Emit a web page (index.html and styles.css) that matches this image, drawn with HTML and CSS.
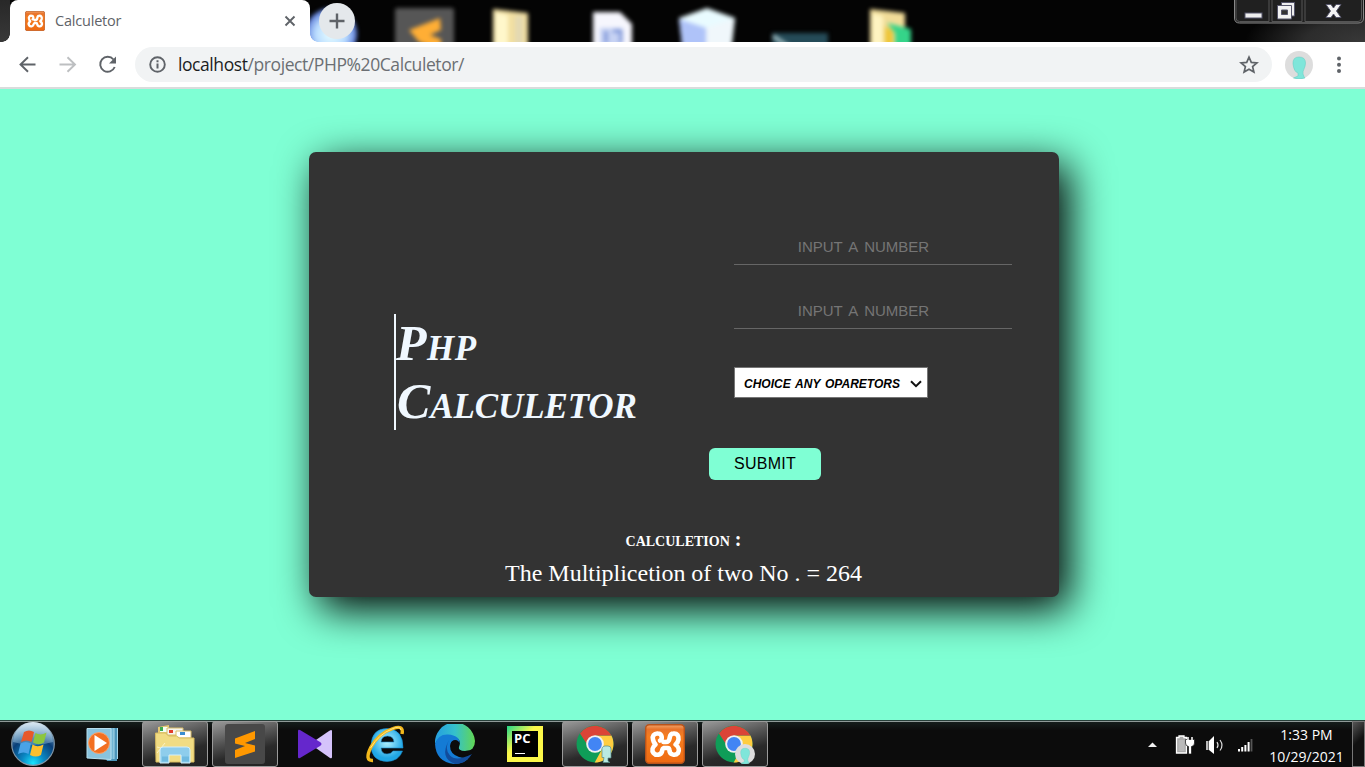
FILE: index.html
```html
<!DOCTYPE html>
<html lang="en">
<head>
<meta charset="utf-8">
<title>Calculetor</title>
<link rel="stylesheet" href="styles.css">
</head>
<body>
<svg width="0" height="0" class="defs">
  <defs>
    <linearGradient id="org" x1="0" y1="0" x2="0" y2="1"><stop offset="0" stop-color="#f3a56c"/><stop offset=".12" stop-color="#e8732b"/><stop offset=".3" stop-color="#f77d1e"/><stop offset="1" stop-color="#ee6a12"/></linearGradient>
    <symbol id="xampp" viewBox="0 0 40 40">
      <rect x=".7" y=".7" width="38.6" height="38.6" rx="3.5" fill="url(#org)" stroke="#b9531a" stroke-width="1.4"/>
      <path d="M15 16.500C18 15 17 9.500 13 9.500C9 9 7 12.500 8 15.500Q8.500 18.500 10.500 20.500C7.500 23 6.500 26.500 8.500 29C11 32 16 31 17 27.500Q17.300 24.500 19 24H22.500Q24.500 24 24.500 27C25 31 30.500 32 33 29C34.500 26.500 34 23 30.500 20.500Q33 18.500 33.500 15.500C34 12 32 9 28.500 9.500C24.500 9.500 25 13 24.500 14.500Q24 18 21 18H18.500" fill="none" stroke="#fff" stroke-width="4.600" stroke-linecap="round" stroke-linejoin="round"/>
    </symbol>
    <symbol id="chrome" viewBox="0 0 38 38">
      <circle cx="19" cy="19" r="18.500" fill="#0f9d58"/>
      <path d="M3 9.700L11 23l8-4z" fill="#0f9d58"/>
      <path d="M19 10.500h16.400A18.500 18.500 0 0 1 18.700 37.500L26.500 23.200z" fill="#ffcd40"/>
      <path d="M4 8.500A18.500 18.500 0 0 1 35.400 10.500H19L11.500 20z" fill="#db4437"/>
      <circle cx="19" cy="19" r="8.800" fill="#f1f1f1"/><circle cx="19" cy="19" r="6.900" fill="#4285f4"/>
    </symbol>
    <symbol id="avatar" viewBox="0 0 28 28">
      <circle cx="14" cy="14" r="14" fill="#ddd"/>
      <path d="M8 13Q7.500 6 14 6T20.500 12C20.500 17 17.500 19 18 23Q19 26 20 27Q14 29 8.500 27L13 25V22Q9 21 8 13z" fill="#7fe6da" stroke="#61cbc0" stroke-width=".5"/>
    </symbol>
  </defs>
</svg>

<header class="titlebar">
  <svg class="desktop" viewBox="310 0 1055 42" width="1055" height="42">
    <defs>
      <radialGradient id="globe"><stop offset="0" stop-color="#eaffff"/><stop offset=".6" stop-color="#b9dcff"/><stop offset="1" stop-color="#5877d8"/></radialGradient>
      <radialGradient id="shine" cx="1" cy="1" r="1"><stop offset="0" stop-color="#383838"/><stop offset=".5" stop-color="#2c2c2c"/><stop offset="1" stop-color="#2c2c2c" stop-opacity="0"/></radialGradient>
    </defs>
    <rect x="1245" width="120" height="42" fill="url(#shine)"/>
    <g class="blurred">
      <circle cx="331" cy="34" r="26" fill="url(#globe)"/>
      <rect x="395" y="8" width="59" height="50" rx="2" fill="#565656"/>
      <path d="M440 18l-31 12 10 12 22 9v-12l-11-4 11-5z" fill="#ffae35"/>
      <path d="M493 9l35 4v40h-35z" fill="#f2dfa1"/><path d="M495 12l13 3v35h-13z" fill="#fff7cb"/><path d="M515 16h8v35h-8z" fill="#e3d9b3"/>
      <path d="M593 12h27l12 12v30h-39z" fill="#f6f6fd"/><path d="M600 28h22v24h-22z" fill="#c6d2f3"/><path d="M606 31v12M613 31h8v12" fill="none" stroke="#7a92d6" stroke-width="3"/>
      <path d="M679 18l28-10 28 10-4 35h-48z" fill="#e9fbff"/><path d="M679 19l27 9v25h-23z" fill="#afc3f9"/><path d="M706 28l28-9-4 33h-24z" fill="#f0f7fb"/>
      <path d="M772 33h56v20h-56z" fill="#254b58"/><path d="M773 36l17 12" stroke="#9db8bd" stroke-width="4"/>
      <path d="M870 9l35 4v40h-35z" fill="#f1dc98"/><path d="M872 13l11 3v35h-11z" fill="#fff4c1"/><path d="M885 26l8 5v24h-8z" fill="#eec638"/><path d="M887 23l24 6v24h-16v-20z" fill="#35d489"/>
    </g>
  </svg>
  <div class="corner"></div>
  <div class="tab">
    <svg class="favicon" width="20" height="20"><use href="#xampp"/></svg>
    <span class="tab-title">Calculetor</span>
    <svg class="tab-close" width="12" height="12" viewBox="0 0 12 12"><path d="M1.500 1.500l9 9m0-9l-9 9" stroke="#5f6368" stroke-width="1.900"/></svg>
  </div>
  <div class="newtab"><svg width="16" height="16" viewBox="0 0 16 16"><path d="M8 .5v15M.5 8h15" stroke="#5f6368" stroke-width="2.400"/></svg></div>
  <svg class="winbtns" width="131" height="25" viewBox="0 0 131 25">
    <path d="M.5 0v18q0 5 5 5H124q5.500 0 5.500-5V0" fill="#202020" stroke="#888"/>
    <path d="M2 0v18q0 3.500 3.500 3.500H35V0M38 0v21.500H68V0M71 0v21.500H124q3.500 0 3.500-3.500V0" fill="none" stroke="#555"/>
    <rect x="11" y="13" width="17" height="5" fill="#eee" stroke="#55556a"/>
    <path d="M47.500 2.500h13V16h-13z" fill="#eee" stroke="#55556a"/>
    <path d="M43.500 5.500h14V19h-14z" fill="#f2f2f2" stroke="#55556a"/><path d="M47.500 10h6v4.500h-6z" fill="#333" stroke="#55556a"/>
    <path d="M92 4.500h5l2.500 3.500 2.500-3.500h5L102.500 11l4.500 6.500h-5L99.500 14 97 17.500h-5l4.500-6.500z" fill="#f4f4f4" stroke="#55556a"/>
  </svg>
</header>

<nav class="toolbar">
  <svg class="nav-icons" width="120" height="46" viewBox="0 0 120 46" fill="none" stroke="#5f6368" stroke-width="1.900">
    <path d="M35.500 22.500H21M28 15.200l-7.500 7.300 7.500 7.300"/>
    <path d="M59.500 22.500H75M67.500 15.200l7.500 7.300-7.500 7.300" stroke="#bdbfc1"/>
    <path d="M113.500 17.500A7.500 7.500 0 1 0 114.700 25"/><path d="M116 14.500v7h-7z" fill="#5f6368" stroke="none"/>
  </svg>
  <div class="omnibox">
    <svg width="17" height="17" viewBox="0 0 17 17"><circle cx="8.500" cy="8.500" r="7.300" fill="none" stroke="#5f6368" stroke-width="1.900"/><path d="M8.500 7.500v5M8.500 4.300v2" stroke="#5f6368" stroke-width="2"/></svg>
    <span class="url"><b>localhost</b>/project/PHP%20Calculetor/</span>
    <svg class="star" width="20" height="20" viewBox="0 0 20 20"><path d="M10 2.200l2.300 5.200 5.600.5-4.300 3.700 1.300 5.500L10 14.200l-4.900 2.900 1.300-5.500-4.300-3.700 5.600-.5z" fill="none" stroke="#5f6368" stroke-width="1.700"/></svg>
  </div>
  <svg class="profile" width="28" height="28"><use href="#avatar"/></svg>
  <svg class="dots" width="6" height="18" viewBox="0 0 6 18" fill="#5f6368"><circle cx="3" cy="2.500" r="2"/><circle cx="3" cy="8.800" r="2"/><circle cx="3" cy="15.100" r="2"/></svg>
</nav>

<main class="page">
  <section class="card">
    <div class="columns">
      <h1 class="title"><span class="l1">Php</span><span class="l2">Calculetor</span></h1>
      <form class="form">
        <input class="field" type="text" placeholder="INPUT A NUMBER">
        <input class="field" type="text" placeholder="INPUT A NUMBER">
        <div class="select"><span class="select-text">CHOICE ANY OPARETORS</span><svg width="12" height="8" viewBox="0 0 12 8"><path d="M1 1.200l5 5 5-5" fill="none" stroke="#111" stroke-width="2"/></svg></div>
        <button class="submit" type="button"><span>SUBMIT</span></button>
      </form>
    </div>
    <h2 class="caption"><span>calculetion :</span></h2>
    <p class="result"><span>The Multiplicetion of two No . = 264</span></p>
  </section>
</main>

<footer class="taskbar">
  <div class="slot start">
    <svg width="46" height="46" viewBox="0 0 46 46">
      <defs><radialGradient id="orb" cx=".5" cy=".95" r=".9"><stop offset="0" stop-color="#19e5ff"/><stop offset=".3" stop-color="#0a86c2"/><stop offset=".65" stop-color="#0a3f78"/><stop offset="1" stop-color="#7fa9c8"/></radialGradient>
      <linearGradient id="gloss" x1="0" y1="0" x2="0" y2="1"><stop offset="0" stop-color="#e6f1f8" stop-opacity=".9"/><stop offset="1" stop-color="#7fb0d2" stop-opacity=".45"/></linearGradient></defs>
      <circle cx="23" cy="23" r="21.300" fill="url(#orb)" stroke="#8197a8" stroke-width="1.200"/>
      <path d="M3 21A20 20 0 0 1 43 21Q23 27 3 21z" fill="url(#gloss)"/>
      <path d="M14 11q5-3 10 0l-2.500 10q-5-3-10.500 0z" fill="#e8582a"/><path d="M25.500 12q5 3 11-.500L34 21.500q-5 3.500-11 0z" fill="#8cc63f"/><path d="M10.500 22.500q5-3 10.500 0L18.500 33q-5-3-10.500 0z" fill="#4aa3e8"/><path d="M22.500 23.500q5 3.500 11 0L31 34q-5 3-11 0z" fill="#fdbf2d"/>
    </svg>
  </div>
  <div class="slot">
    <svg width="36" height="36" viewBox="0 0 36 36">
      <path d="M8 2h25l-1 33H22z" fill="#4b94b8"/><path d="M6 2h23v31H14z" fill="#72b5d3"/><path d="M32.500 2v31M29 2v31" stroke="#a9d6e8"/>
      <path d="M2 2.500h24v31L2 32z" fill="#89c3dd" stroke="#b7dfee"/><circle cx="14" cy="17" r="10.500" fill="#f26f21" stroke="#f8a36d"/><path d="M9.500 9l12.500 8-12.500 8z" fill="#fff"/>
    </svg>
  </div>
  <div class="slot on">
    <svg width="42" height="42" viewBox="0 0 42 42">
      <path d="M4 4l11-2v6h18v10H4z" fill="#e5c974"/><path d="M6 4h8v5H6z" fill="#f5fff5"/><path d="M6 4h3v4H6z" fill="#3caa4f"/><path d="M13 5h16v7H13z" fill="#f5f5f0" stroke="#d9bd68"/><path d="M15 7h4v3h-4z" fill="#e23d2b"/><path d="M22 8h15v7H22z" fill="#fff" stroke="#d9bd68"/><path d="M26 9h5v3h-5z" fill="#3b8ed0"/>
      <path d="M1.500 10h10l3 3h8l3 2H40v24H2z" fill="#f1dc83" stroke="#d8bc61"/><path d="M3 30l8-10M3 24l15 4" stroke="#fffbe0" opacity=".7"/>
      <path d="M6 40V27q0-3 3-3h24q3 0 3 3v13h-9v-8H15v8z" fill="#8ecdec" stroke="#d2effc"/><path d="M8 36h6M28 36h7" stroke="#4ba5d3" stroke-width="5" opacity=".45"/>
    </svg>
  </div>
  <div class="slot on">
    <svg width="40" height="40" viewBox="0 0 40 40"><rect width="40" height="40" rx="3" fill="#484848"/><path d="M10 14.500L30 7v8l-10 4 10 2.500v6L10 34v-8l10-4-10-2.500z" fill="#ff9800"/></svg>
  </div>
  <div class="slot">
    <svg width="36" height="30" viewBox="0 0 36 30"><path d="M34 1q1 0 1 1v26q0 2-2 1L16 17v-4L32 2z" fill="#d5c3fb"/><path d="M1 2q0-2 2-1l20 12q3 2 0 4L3 29q-2 1-2-1z" fill="#6527cc"/></svg>
  </div>
  <div class="slot">
    <svg width="40" height="40" viewBox="0 0 40 40">
      <defs><radialGradient id="ie" cx=".5" cy=".4"><stop offset="0" stop-color="#b7f4ff"/><stop offset="1" stop-color="#20a7e5"/></radialGradient></defs>
      <path d="M38 24H16Q16.500 30 22 30 26 30 28 27h9.500Q34 37 22 37.500 6 37 6 21 7 4.500 22 4.500 38 5 38 24zM16 18h13Q28.500 12 22.500 12T16 18z" fill="url(#ie)" stroke="#1b8ccc" stroke-width=".6" fill-rule="evenodd"/>
      <path d="M37 10Q39 .5 28 4.500 14 9 6 23-1 37 8 36.500" fill="none" stroke="#f4b91b" stroke-width="3.400"/><path d="M36 6Q35 1 27 5 14 10 5.500 24" fill="none" stroke="#ffe588" stroke-width="1"/>
    </svg>
  </div>
  <div class="slot">
    <svg width="40" height="40" viewBox="0 0 40 40">
      <defs><linearGradient id="eg"><stop offset="0" stop-color="#249de0"/><stop offset=".5" stop-color="#35c1cc"/><stop offset="1" stop-color="#62d653"/></linearGradient></defs>
      <path d="M0 20A20 20 0 0 1 40 17Q40 27 30 27q-8 0-6-4 3-8-4-9Q5 10 0 20z" fill="url(#eg)"/>
      <path d="M0 20Q3 10 13 10.500q12 1 11.500 8.500L22 17q-6-2-7 5 0 8 9 11l9 2Q27 40 19 40 1 38 0 20z" fill="#147bd5"/>
      <path d="M14 16Q9 25 15 31.500t22-1.500q-6 10-17 10Q4 34 14 16z" fill="#124c9c"/>
      <path d="M16 21q0-5 5-5 4 1 3 5-2 6 6 6 5 0 8-2l-2 5q-9 4-15 0-5-4-5-9z" fill="#0c0c0c"/>
    </svg>
  </div>
  <div class="slot">
    <div class="pycharm"><span class="pc">PC</span><i></i></div>
  </div>
  <div class="slot on"><svg width="38" height="38" viewBox="0 0 38 38"><use href="#chrome"/><path d="M26 23q1-2 3-2h3q3 0 3 3v9h-3v3l2 1.500h-7l1-5h-2z" fill="#b9e9e2" stroke="#568b87" stroke-width=".7"/></svg></div>
  <div class="slot on"><svg width="40" height="40"><use href="#xampp"/></svg></div>
  <div class="slot on"><svg width="40" height="40" viewBox="0 0 40 40"><use href="#chrome" width="38" height="38" y="1"/><use href="#avatar" x="20" y="20" width="20" height="20"/></svg></div>
  <div class="tray">
    <svg width="120" height="46" viewBox="1139 721 120 46">
      <path d="M1148 747h9l-4.500-4.500z" fill="#f2f2f2"/>
      <path d="M1179 737.500v-1.500h5v1.500h2.500v15.500h-10v-15.500z" fill="#aaa" stroke="#fff" stroke-width="1.300"/><path d="M1178.500 740h6v11h-6z" fill="#bbb"/>
      <path d="M1185.500 739.500h9v3.500q0 3-3 3.500v7.500h-3v-7.500q-3-.5-3-3.500z" fill="#fff" stroke="#111" stroke-width=".7"/><path d="M1188 737v3M1192 737v3" stroke="#fff" stroke-width="1.500"/>
      <path d="M1206 741h2.500v9h-2.500z" fill="#bbb"/><path d="M1209 741l5-5v18l-5-4z" fill="#fff"/><path d="M1217 742q2 3 0 6M1220 740q4 5.500 0 10.500" fill="none" stroke="#ddd" stroke-width="1.200"/>
      <path d="M1239 749v2.500M1242.200 747v4.500M1245.400 745v6.500M1248.600 742v9.500" stroke="#fff" stroke-width="2"/><path d="M1251.500 739v12.500" stroke="#555" stroke-width="1.800"/>
    </svg>
    <div class="clock"><span class="time">1:33 PM</span><span class="date">10/29/2021</span></div>
  </div>
  <div class="peek"></div>
</footer>
</body>
</html>
```
FILE: styles.css
```css
* { box-sizing: border-box; }
body { margin: 0; width: 1365px; height: 767px; overflow: hidden; display: flex; flex-direction: column; font-family: "Liberation Sans", Arial, sans-serif; }
svg { display: block; flex: none; }
.defs { position: absolute; }

.titlebar { position: relative; height: 42px; background: #040404; display: flex; flex: none; }
.desktop { position: absolute; left: 310px; top: 0; }
.blurred { filter: blur(2.2px); }
.corner { width: 10px; background: linear-gradient(#282828, #383838); }
.tab { position: relative; width: 300px; height: 42px; background: #fff; border-radius: 8px 8px 0 0; display: flex; align-items: center; padding: 0 14px 0 15px; }
.tab::before, .tab::after { content: ""; position: absolute; bottom: 0; width: 8px; height: 8px; }
.tab::before { left: -8px; background: radial-gradient(circle at 0 0, transparent 7.500px, #fff 8px); }
.tab::after { right: -8px; background: radial-gradient(circle at 100% 0, transparent 7.500px, #fff 8px); }
.tab-title { margin-left: 10px; padding-bottom: 2px; font: 14.500px "Open Sans", sans-serif; color: #5f6368; letter-spacing: -.2px; flex: 1; }
.newtab { position: relative; margin: 3px 0 0 9px; width: 36px; height: 36px; border-radius: 50%; background: #e4e8eb; display: flex; align-items: center; justify-content: center; }
.winbtns { position: relative; margin-left: auto; }

.toolbar { height: 47px; background: #fff; border-bottom: 2px solid #d9dcdc; display: flex; align-items: center; flex: none; }
.nav-icons { margin-right: 15px; }
.omnibox { width: 1137px; height: 35px; border-radius: 18px; background: #f1f3f4; display: flex; align-items: center; padding: 0 13px 0 14px; }
.url { margin-left: 12px; padding-bottom: 1px; flex: 1; font: 17.500px "Open Sans", sans-serif; letter-spacing: -.42px; color: #6b6f73; }
.url b { font-weight: 400; color: #1c1d1f; }
.profile { margin-left: 13px; }
.dots { margin-left: 23px; }

.page { flex: 1; background: #7fffd4; padding: 63px 0 0 309px; min-height: 0; }
.card { width: 750px; height: 445px; background: #333; border-radius: 7px; box-shadow: 10px 12px 42px #000; display: flex; flex-direction: column; }
.columns { display: flex; height: 375px; }
.title { margin: 162px 0 0 85px; width: 315px; height: 116px; border-left: 2px solid aliceblue; color: aliceblue; font: italic bold 50px/58px "Liberation Serif", "Times New Roman", serif; font-variant: small-caps; display: flex; flex-direction: column; align-items: flex-start; }
.l1 { letter-spacing: .5px; }
.l2 { padding-left: 1px; letter-spacing: -.1px; }
.form { display: flex; flex-direction: column; align-items: flex-start; padding-top: 77px; }
.field { margin: 0 0 28px 25px; width: 278px; height: 36px; background: none; border: 0; border-bottom: 1px solid #666; border-radius: 0; padding: 0 19px 0 0; font: 15px "Liberation Sans", Arial, sans-serif; word-spacing: 2.500px; text-align: center; outline: 0; }
.field::placeholder { color: #757575; }
.select { margin: 10px 0 0 25px; width: 194px; height: 31px; background: #fff; border: 1px solid #767676; display: flex; align-items: center; justify-content: space-between; padding: 2px 5px 0 9px; font: italic bold 12px "Liberation Sans", Arial, sans-serif; word-spacing: 1.500px; color: #000; }
.submit { margin-top: 50px; width: 112px; height: 32px; border: 0; border-radius: 6px; background: #7fffd4; color: #000; font: 16px "Liberation Sans", Arial, sans-serif; letter-spacing: .25px; padding: 0; }
.caption { margin: 0; padding-right: 1px; text-align: center; font: bold 20px/24px "Liberation Serif", "Times New Roman", serif; font-variant: small-caps; color: #fff; }
.result { margin: 8px 0 0; padding-right: 1px; text-align: center; font: 24px/28px "Liberation Serif", "Times New Roman", serif; letter-spacing: -.02px; color: #fff; }

.taskbar { position: relative; height: 47px; background: linear-gradient(#16201e, #0c0c0c 20%); border-top: 1px solid #27403a; box-shadow: inset 0 1px #8f9a98; display: flex; flex: none; padding-left: 2px; }
.slot { width: 66px; height: 46px; margin-right: 4px; display: flex; align-items: center; justify-content: center; flex: none; }
.start { width: 62px; margin-right: 8px; }
.slot:nth-child(2) { width: 62px; margin-right: 8px; }
.on { border: 1px solid #9a9a9a; border-radius: 3px; background: linear-gradient(165deg, #999, #555 38%, #2a2a2a 65%, #222); }
.pycharm { width: 36px; height: 36px; padding: 5px; background: linear-gradient(135deg, #21d789, #fcf84a 40%, #fcf84a); }
.pc { display: block; width: 26px; height: 26px; padding-left: 2px; background: #000; color: #fff; font: bold 13px/15px "Open Sans", sans-serif; }
.pycharm i { display: block; width: 10px; height: 1px; margin: -4px 0 0 3px; background: #fff; }
.tray { margin-left: auto; display: flex; }
.clock { width: 93px; display: flex; flex-direction: column; align-items: center; font: 14px/22px "Open Sans", sans-serif; color: #fff; letter-spacing: 0; padding: 3px 0 0 2px; }
.peek { width: 13px; border: 1px solid #777; background: linear-gradient(135deg, #555, #111 45%); }
```
